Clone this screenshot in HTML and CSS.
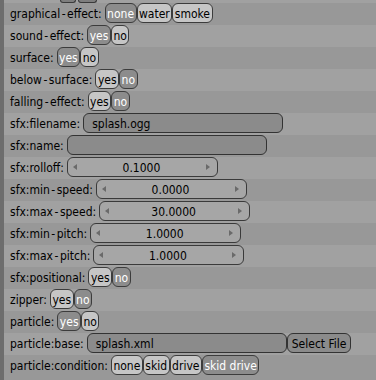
FILE: index.html
```html
<!DOCTYPE html>
<html>
<head>
<meta charset="utf-8">
<link rel="stylesheet" href="styles.css">
</head>
<body>
<div class="panel">
  <div class="row partial"><span class="stub"></span><span class="stub"></span></div>
  <div class="row"><span class="label">graphical<span class="hy">-</span>effect:</span><span class="group"><span class="tg on">none</span><span class="tg">water</span><span class="tg">smoke</span></span></div>
  <div class="row"><span class="label">sound<span class="hy">-</span>effect:</span><span class="group"><span class="tg on">yes</span><span class="tg">no</span></span></div>
  <div class="row"><span class="label">surface:</span><span class="group"><span class="tg on">yes</span><span class="tg">no</span></span></div>
  <div class="row"><span class="label">below<span class="hy">-</span>surface:</span><span class="group"><span class="tg">yes</span><span class="tg on">no</span></span></div>
  <div class="row"><span class="label">falling<span class="hy">-</span>effect:</span><span class="group"><span class="tg">yes</span><span class="tg on">no</span></span></div>
  <div class="row"><span class="label">sfx:filename:</span><span class="text">splash.ogg</span></div>
  <div class="row"><span class="label">sfx:name:</span><span class="text"></span></div>
  <div class="row"><span class="label">sfx:rolloff:</span><span class="num"><span class="arr left"></span><span class="val">0.1000</span><span class="arr right"></span></span></div>
  <div class="row"><span class="label">sfx:min<span class="hy">-</span>speed:</span><span class="num"><span class="arr left"></span><span class="val">0.0000</span><span class="arr right"></span></span></div>
  <div class="row"><span class="label">sfx:max<span class="hy">-</span>speed:</span><span class="num"><span class="arr left"></span><span class="val">30.0000</span><span class="arr right"></span></span></div>
  <div class="row"><span class="label">sfx:min<span class="hy">-</span>pitch:</span><span class="num"><span class="arr left"></span><span class="val">1.0000</span><span class="arr right"></span></span></div>
  <div class="row"><span class="label">sfx:max<span class="hy">-</span>pitch:</span><span class="num"><span class="arr left"></span><span class="val">1.0000</span><span class="arr right"></span></span></div>
  <div class="row"><span class="label">sfx:positional:</span><span class="group"><span class="tg">yes</span><span class="tg on">no</span></span></div>
  <div class="row"><span class="label">zipper:</span><span class="group"><span class="tg">yes</span><span class="tg on">no</span></span></div>
  <div class="row"><span class="label">particle:</span><span class="group"><span class="tg on">yes</span><span class="tg">no</span></span></div>
  <div class="row"><span class="label">particle:base:</span><span class="text">splash.xml</span><span class="btn">Select File</span></div>
  <div class="row"><span class="label">particle:condition:</span><span class="group"><span class="tg">none</span><span class="tg">skid</span><span class="tg">drive</span><span class="tg on">skid drive</span></span></div>
</div>
</body>
</html>
```

FILE: styles.css
```css
html, body {
  margin: 0;
  padding: 0;
  background: #989898;
}
body {
  font-family: "DejaVu Sans Condensed", "DejaVu Sans", sans-serif;
  font-size: 12px;
  color: #000;
}
.panel {
  border-left: 4px solid #6d6d6d;
  min-height: 380px;
  box-sizing: border-box;
}
.row {
  display: flex;
  align-items: center;
  height: 20px;
  padding: 0 0 2px 6px;
  background: #a1a1a1;
  white-space: nowrap;
}
.row:nth-child(even) {
  background: #989898;
}
.row.partial {
  height: 3px;
  padding: 0 0 0 56px;
  align-items: flex-start;
  overflow: hidden;
}
.stub {
  width: 14px;
  height: 2px;
  background: #7e7e7e;
  border: 1px solid #3a3a3a;
  border-top: none;
  border-radius: 0 0 4px 4px;
  margin-right: 2px;
}
.stub + .stub {
  width: 17px;
}
.label {
  margin-right: 3px;
  padding-top: 2px;
}
.hy {
  margin: 0 1.5px;
}
.group {
  display: flex;
}
.tg {
  box-sizing: border-box;
  height: 20px;
  line-height: 18px;
  padding: 1px 1.5px 0;
  border: 1px solid #3c3c3c;
  border-radius: 6px;
  background: #c6c6c6;
  color: #000;
}
.tg.on {
  background: #8c8c8c;
  color: #fff;
}
.text {
  box-sizing: border-box;
  width: 200px;
  height: 20px;
  line-height: 18px;
  padding: 1px 0 0 8px;
  border: 1px solid #333;
  border-radius: 6px;
  background: #8b8b8b;
}
.btn {
  box-sizing: border-box;
  height: 20px;
  line-height: 18px;
  padding: 1px 4px 0;
  border: 1px solid #333;
  border-radius: 6px;
  background: #8b8b8b;
}
.num {
  box-sizing: border-box;
  width: 151px;
  height: 20px;
  border: 1px solid #3a3a3a;
  border-radius: 6px;
  background: #a6a6a6;
  display: flex;
  align-items: center;
  padding: 0 7px 0 5px;
}
.val {
  flex: 1;
  text-align: center;
  line-height: 18px;
  padding-top: 1px;
}
.arr {
  width: 0;
  height: 0;
  border-top: 3.5px solid transparent;
  border-bottom: 3.5px solid transparent;
}
.arr.left {
  border-right: 4px solid #6a6a6a;
}
.arr.right {
  border-left: 4px solid #6a6a6a;
}
```
